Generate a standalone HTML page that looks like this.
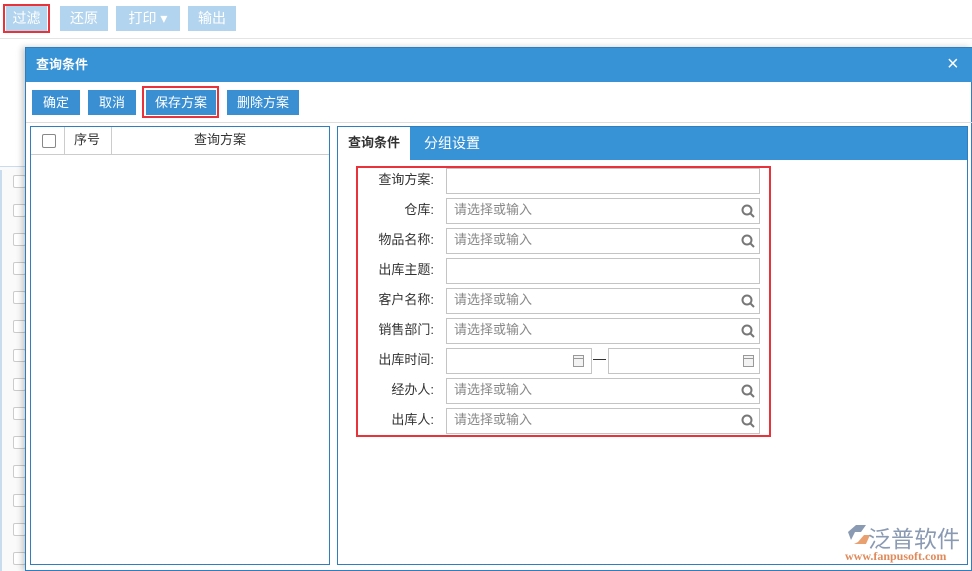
<!DOCTYPE html>
<html><head><meta charset="utf-8"><style>
*{box-sizing:border-box;margin:0;padding:0}
body{width:972px;height:571px;overflow:hidden;background:#fff;position:relative;font-family:"Liberation Sans","Noto Sans CJK SC",sans-serif;font-size:13px;color:#333;line-height:1.2}
.a{position:absolute}
.tb{position:absolute;top:6px;height:25px;background:#b3d4ee;color:#fff;font-size:14px;text-align:center;line-height:25px}
.btn{position:absolute;top:90px;height:25px;background:#3a8fd3;color:#fff;font-size:13px;text-align:center;line-height:25px}
.lbl{position:absolute;right:538px;width:90px;text-align:right;font-size:13px;color:#333;line-height:24px}
.in{position:absolute;left:446px;width:314px;height:26px;border:1px solid #c4c4c4;background:#fff;color:#888;line-height:22px;padding-left:7px;font-size:13px}
.cb{position:absolute;left:13px;width:13px;height:13px;border:1px solid #ccc;border-radius:2px;background:#fff}
</style></head><body>
<div class="tb" style="left:6px;width:41px">过滤</div>
<div class="a" style="left:3px;top:4px;width:47px;height:29px;border:2px solid #e8333a"></div>
<div class="tb" style="left:60px;width:48px">还原</div>
<div class="tb" style="left:116px;width:64px">打印 ▾</div>
<div class="tb" style="left:188px;width:48px">输出</div>
<div class="a" style="left:0;top:38px;width:972px;height:1px;background:#e4e4e4"></div>
<div class="a" style="left:0;top:166px;width:26px;height:405px;background:#fafafa;border-top:1px solid #c8dced"></div>
<div class="a" style="left:0;top:170px;width:2px;height:401px;background:#c8dced"></div>
<div class="cb" style="top:175px"></div><div class="cb" style="top:204px"></div><div class="cb" style="top:233px"></div><div class="cb" style="top:262px"></div><div class="cb" style="top:291px"></div><div class="cb" style="top:320px"></div><div class="cb" style="top:349px"></div><div class="cb" style="top:378px"></div><div class="cb" style="top:407px"></div><div class="cb" style="top:436px"></div><div class="cb" style="top:465px"></div><div class="cb" style="top:494px"></div><div class="cb" style="top:523px"></div><div class="cb" style="top:552px"></div>
<div class="a" style="left:25px;top:47px;width:947px;height:524px;background:#fff;border:1px solid #2f7fc0;box-shadow:-3px 0 6px rgba(0,0,0,.2)"></div>
<div class="a" style="left:26px;top:48px;width:946px;height:34px;background:#3793d6;color:#fff;font-weight:bold;font-size:13px;line-height:33px;padding-left:10px">查询条件</div>
<div class="a" style="left:947px;top:52px;color:#fff;font-size:20px;line-height:24px">×</div>
<div class="btn" style="left:32px;width:48px">确定</div>
<div class="btn" style="left:88px;width:48px">取消</div>
<div class="btn" style="left:146px;width:70px">保存方案</div>
<div class="a" style="left:142px;top:86px;width:77px;height:32px;border:2px solid #e8333a"></div>
<div class="btn" style="left:227px;width:72px">删除方案</div>
<div class="a" style="left:26px;top:122px;width:946px;height:1px;background:#ddd"></div>
<div class="a" style="left:30px;top:126px;width:300px;height:439px;border:1px solid #2f7fc0"></div>
<div class="a" style="left:31px;top:127px;width:298px;height:28px;border-bottom:1px solid #ccc"></div>
<div class="a" style="left:64px;top:127px;width:1px;height:28px;background:#ccc"></div>
<div class="a" style="left:111px;top:127px;width:1px;height:28px;background:#ccc"></div>
<div class="a" style="left:42px;top:134px;width:14px;height:14px;border:1px solid #888;border-radius:2px"></div>
<div class="a" style="left:74px;top:132px;font-size:13px;line-height:16px">序号</div>
<div class="a" style="left:194px;top:132px;font-size:13px;line-height:16px">查询方案</div>
<div class="a" style="left:337px;top:126px;width:631px;height:439px;border:1px solid #2f7fc0"></div>
<div class="a" style="left:338px;top:127px;width:629px;height:33px;background:#3793d6"></div>
<div class="a" style="left:338px;top:127px;width:72px;height:34px;background:#fff;font-weight:bold;text-align:center;line-height:32px">查询条件</div>
<div class="a" style="left:424px;top:127px;color:#fff;font-size:14px;line-height:32px">分组设置</div>
<div class="a" style="left:356px;top:166px;width:415px;height:271px;border:2px solid #e8333a"></div>
<div class="lbl" style="top:168px">查询方案:</div><div class="in" style="top:168px"></div>
<div class="lbl" style="top:198px">仓库:</div><div class="in" style="top:198px">请选择或输入</div>
<div class="lbl" style="top:228px">物品名称:</div><div class="in" style="top:228px">请选择或输入</div>
<div class="lbl" style="top:258px">出库主题:</div><div class="in" style="top:258px"></div>
<div class="lbl" style="top:288px">客户名称:</div><div class="in" style="top:288px">请选择或输入</div>
<div class="lbl" style="top:318px">销售部门:</div><div class="in" style="top:318px">请选择或输入</div>
<div class="lbl" style="top:348px">出库时间:</div>
<div class="in" style="top:348px;width:146px"></div>
<div class="a" style="left:593px;top:359px;width:13px;height:1px;background:#333"></div>
<div class="in" style="top:348px;left:608px;width:152px"></div>
<div class="lbl" style="top:378px">经办人:</div><div class="in" style="top:378px">请选择或输入</div>
<div class="lbl" style="top:408px">出库人:</div><div class="in" style="top:408px">请选择或输入</div>
<svg class="a" style="left:0;top:0" width="972" height="571">
<g fill="none" stroke="#777" stroke-width="2">
<circle cx="747" cy="210" r="4.5"/><line x1="750.5" y1="213.5" x2="754" y2="217"/>
<circle cx="747" cy="240" r="4.5"/><line x1="750.5" y1="243.5" x2="754" y2="247"/>
<circle cx="747" cy="300" r="4.5"/><line x1="750.5" y1="303.5" x2="754" y2="307"/>
<circle cx="747" cy="330" r="4.5"/><line x1="750.5" y1="333.5" x2="754" y2="337"/>
<circle cx="747" cy="390" r="4.5"/><line x1="750.5" y1="393.5" x2="754" y2="397"/>
<circle cx="747" cy="420" r="4.5"/><line x1="750.5" y1="423.5" x2="754" y2="427"/>
</g>
<g fill="#f3f3f3" stroke="#999" stroke-width="1">
<rect x="573.5" y="355.5" width="10" height="11"/><line x1="573" y1="358.5" x2="584" y2="358.5"/>
<rect x="743.5" y="355.5" width="10" height="11"/><line x1="743" y1="358.5" x2="754" y2="358.5"/>
</g>
<path d="M848 532 l8-7 h10 l-5 7 h-6 l-4 8z" fill="#8a9ab2"/>
<path d="M858 542 l6-7 h6 l-4 9 h-12z" fill="#e8a070"/>
<text x="868" y="547" font-family="Noto Sans CJK SC,sans-serif" font-size="23" fill="#8a9ab2">泛普软件</text>
<text x="845" y="560" font-family="Liberation Serif,serif" font-size="12" fill="#e08a5a" font-weight="bold">www.fanpusoft.com</text>
</svg>
</body></html>
